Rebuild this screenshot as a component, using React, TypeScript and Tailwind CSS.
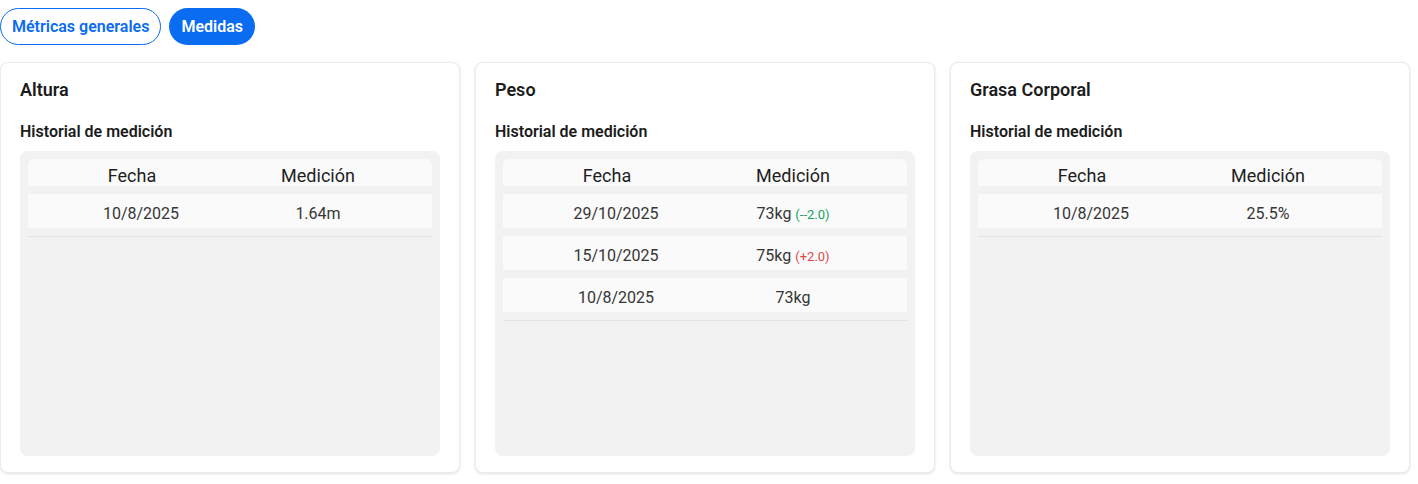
import React from 'react'

type Row = { date: string; value: string; delta?: string; trend?: 'up' | 'down' }

const cards: { title: string; rows: Row[] }[] = [
  { title: 'Altura', rows: [{ date: '10/8/2025', value: '1.64m' }] },
  {
    title: 'Peso',
    rows: [
      { date: '29/10/2025', value: '73kg', delta: '(--2.0)', trend: 'down' },
      { date: '15/10/2025', value: '75kg', delta: '(+2.0)', trend: 'up' },
      { date: '10/8/2025', value: '73kg' },
    ],
  },
  { title: 'Grasa Corporal', rows: [{ date: '10/8/2025', value: '25.5%' }] },
]

function MeasureCard({ title, rows }: { title: string; rows: Row[] }) {
  return (
    <div className="flex h-[411px] flex-col rounded-lg border border-[#ececec] bg-white px-[19px] pt-[15px] pb-4 shadow-[0_1px_3px_rgba(0,0,0,0.12)]">
      <h2 className="text-[18px] font-semibold leading-6 text-[#1c1c1c]">{title}</h2>
      <h3 className="mt-[20px] text-[16px] font-semibold leading-5 text-[#1c1c1c]">Historial de medición</h3>
      <div className="mt-[9px] flex-1 rounded-lg bg-[#f2f2f2] px-2 pt-2">
        <div className="grid h-[27px] grid-cols-[208px_164px_1fr] items-center rounded-t-md bg-[#fafafa] pt-[3px] text-center text-[18px] font-normal text-[#1e1e1e]">
          <span>Fecha</span>
          <span>Medición</span>
          <span />
        </div>
        <div className="border-b border-[#e2e2e2] pb-2">
          {rows.map((r, i) => (
            <div
              key={i}
              className="mt-2 grid h-[34px] grid-cols-[226px_128px_1fr] items-center bg-[#fafafa] pt-[5px] text-center text-[16px] text-[#363636]"
            >
              <span>{r.date}</span>
              <span className="whitespace-nowrap">
                {r.value}
                {r.delta && (
                  <span className={`ml-1 text-[13px] ${r.trend === 'down' ? 'text-[#17a062]' : 'text-[#d94a4a]'}`}>
                    {r.delta}
                  </span>
                )}
              </span>
              <span />
            </div>
          ))}
        </div>
      </div>
    </div>
  )
}

export default function App() {
  return (
    <div className="min-h-screen bg-white pt-2 font-['Roboto',sans-serif]">
      <div className="flex gap-2">
        <button className="h-[37px] rounded-full border border-[#0a6cf0] bg-white px-[11px] text-[16px] font-semibold text-[#0a6cf0]">
          Métricas generales
        </button>
        <button className="h-[37px] rounded-full bg-[#0a6cf0] px-3 text-[16px] font-semibold text-white">
          Medidas
        </button>
      </div>
      <div className="mt-[17px] grid w-[1410px] grid-cols-3 gap-[15px]">
        {cards.map((c) => (
          <MeasureCard key={c.title} title={c.title} rows={c.rows} />
        ))}
      </div>
    </div>
  )
}
